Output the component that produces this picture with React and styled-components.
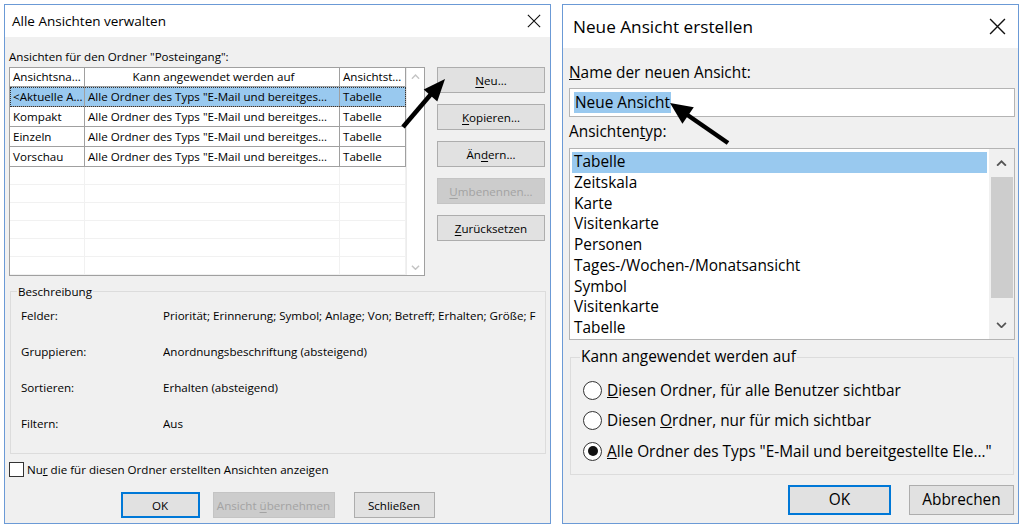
import React from "react";
import styled, { createGlobalStyle } from "styled-components";

const GlobalStyle = createGlobalStyle`
  html, body { margin: 0; padding: 0; background: #fff; }
  body { font-family: "Open Sans", "Noto Sans", sans-serif; color: #000; }
  * { box-sizing: border-box; }
`;

const Page = styled.div`
  position: relative;
  width: 1024px;
  height: 528px;
  display: flex;
  align-items: flex-start;
  padding: 4px 0 0 4px;
  gap: 11px;
  overflow: hidden;
`;

const Window = styled.div`
  width: ${(p) => p.$w}px;
  height: 520px;
  border: 1px solid #6b9ad6;
  background: #f0f0f0;
  display: flex;
  flex-direction: column;
`;

const TitleBar = styled.div`
  flex: none;
  height: ${(p) => p.$h}px;
  background: #fff;
  display: flex;
  align-items: center;
  justify-content: space-between;
  padding: 0 ${(p) => p.$pr}px 0 ${(p) => p.$pl}px;
  font-size: ${(p) => p.$fs}px;
  color: #000;
`;

const Body = styled.div`
  flex: 1;
  display: flex;
  flex-direction: column;
  padding: 0 ${(p) => p.$pr}px 0 ${(p) => p.$pl}px;
  font-size: ${(p) => p.$fs}px;
`;

const Label = styled.div`
  margin-top: ${(p) => p.$mt}px;
  line-height: ${(p) => p.$lh}px;
  white-space: nowrap;
`;

const MainRow = styled.div`
  display: flex;
  margin-top: 3px;
`;

/* ---- left list (table) ---- */
const ListBox = styled.div`
  width: 416px;
  height: 209px;
  background: #fff;
  border: 1px solid #a0a0a0;
  display: flex;
`;

const TableArea = styled.div`
  width: 396px;
  display: flex;
  flex-direction: column;
`;

const TRow = styled.div`
  display: grid;
  grid-template-columns: 75px 255px 66px;
  height: ${(p) => p.$h}px;
  background: ${(p) => (p.$sel ? "#99c9ef" : "transparent")};
  outline: ${(p) => (p.$sel ? "1px dotted #333" : "none")};
  outline-offset: -1px;
`;

const Cell = styled.div`
  border-right: 1px solid ${(p) => (p.$faint ? "#f1f1f1" : "#a0a0a0")};
  border-bottom: 1px solid ${(p) => (p.$faint ? "#f1f1f1" : "#a0a0a0")};
  padding-left: 3px;
  line-height: ${(p) => p.$lh || 19}px;
  white-space: nowrap;
  overflow: hidden;
  text-align: ${(p) => (p.$center ? "center" : "left")};
  color: #000;
`;

const ScrollCol = styled.div`
  flex: 1;
  display: flex;
  flex-direction: column;
  justify-content: space-between;
  align-items: center;
  padding: 6px 0 5px;
  background: #fff;
  border-left: 1px solid #ececec;
`;

const ButtonCol = styled.div`
  margin-left: 12px;
  width: 108px;
  display: flex;
  flex-direction: column;
  gap: 11px;
`;

const Button = styled.button`
  width: ${(p) => p.$w}px;
  height: ${(p) => p.$h}px;
  font-family: inherit;
  font-size: inherit;
  color: ${(p) => (p.$off ? "#a3a3a3" : "#000")};
  background: ${(p) => (p.$off ? "#cccccc" : "#e1e1e1")};
  border: ${(p) =>
    p.$primary ? "2px solid #0078d7" : p.$off ? "1px solid #c4c4c4" : "1px solid #adadad"};
  padding: 0;
  margin: 0;
  flex: none;
  u { text-underline-offset: 2px; }
`;

/* ---- group boxes ---- */
const Group = styled.fieldset`
  margin: ${(p) => p.$m};
  padding: 0;
  border: 1px solid #dcdcdc;
  border-radius: 0;
  min-width: 0;
  legend {
    margin-left: ${(p) => p.$lm}px;
    padding: 0 1px;
    line-height: ${(p) => p.$lh}px;
    color: #000;
  }
`;

const DescGrid = styled.div`
  display: grid;
  grid-template-columns: 142px 1fr;
  grid-auto-rows: 36px;
  align-items: center;
  padding: 0 6px 12px 10px;
  margin-top: -2px;
  span {
    white-space: nowrap;
    overflow: hidden;
  }
`;

const CheckRow = styled.label`
  display: flex;
  align-items: center;
  margin-top: 7px;
  height: 16px;
  white-space: nowrap;
`;

const CheckBox = styled.span`
  width: 15px;
  height: 15px;
  border: 1px solid #333;
  background: #fff;
  margin-right: 3px;
  flex: none;
`;

const ButtonRow = styled.div`
  display: flex;
  justify-content: ${(p) => p.$justify};
  gap: ${(p) => p.$gap}px;
  margin-top: ${(p) => p.$mt}px;
  padding: ${(p) => p.$pad};
`;

/* ---- right dialog ---- */
const TextInput = styled.div`
  margin-top: 7px;
  height: 29px;
  background: #fff;
  border: 1px solid #b4b4b4;
  display: flex;
  align-items: center;
  padding-left: 4px;
  mark {
    background: #99c9ef;
    color: #000;
    padding: 1px 1px;
    line-height: 19px;
  }
`;

const TypeList = styled.div`
  margin-top: 7px;
  height: 192px;
  background: #fff;
  border: 1px solid #b4b4b4;
  display: flex;
`;

const Items = styled.div`
  flex: 1;
  padding: 3px 2px 0;
`;

const Item = styled.div`
  line-height: 20.75px;
  padding-left: 2px;
  background: ${(p) => (p.$sel ? "#99c9ef" : "transparent")};
  white-space: nowrap;
`;

const VScroll = styled.div`
  width: 25px;
  background: #f0f0f0;
  display: flex;
  flex-direction: column;
  align-items: center;
`;

const ScrollBtn = styled.div`
  height: 28px;
  display: flex;
  align-items: center;
  justify-content: center;
  flex: none;
`;

const Thumb = styled.div`
  width: 22px;
  height: 121px;
  background: #cdcdcd;
  flex: none;
`;

const RadioList = styled.div`
  display: flex;
  flex-direction: column;
  padding: 9px 0 7px 12px;
`;

const RadioRow = styled.label`
  display: flex;
  align-items: center;
  height: 30.5px;
  white-space: nowrap;
`;

const Radio = styled.span`
  width: 19px;
  height: 19px;
  border-radius: 50%;
  border: 1px solid #333;
  background: #fff;
  margin-right: 5px;
  flex: none;
  display: flex;
  align-items: center;
  justify-content: center;
  &::after {
    content: "";
    display: ${(p) => (p.$on ? "block" : "none")};
    width: 10px;
    height: 10px;
    border-radius: 50%;
    background: #111;
  }
`;

const Overlay = styled.svg`
  position: absolute;
  left: 0;
  top: 0;
  pointer-events: none;
`;

const CloseX = ({ size, w = 1.3 }) => (
  <svg width={size} height={size} viewBox="0 0 16 16">
    <path d="M1 1 L15 15 M15 1 L1 15" stroke="#111" strokeWidth={w} fill="none" />
  </svg>
);

const Chevron = ({ up, color, size = 9 }) => (
  <svg width={size} height={size * 0.6} viewBox="0 0 10 6">
    <path
      d={up ? "M1 5.2 L5 1.2 L9 5.2" : "M1 0.8 L5 4.8 L9 0.8"}
      stroke={color}
      strokeWidth="1.6"
      fill="none"
    />
  </svg>
);

const views = [
  ["<Aktuelle A…", true],
  ["Kompakt", false],
  ["Einzeln", false],
  ["Vorschau", false],
];

const types = [
  "Tabelle",
  "Zeitskala",
  "Karte",
  "Visitenkarte",
  "Personen",
  "Tages-/Wochen-/Monatsansicht",
  "Symbol",
  "Visitenkarte",
  "Tabelle",
];

const desc = [
  ["Felder:", "Priorität; Erinnerung; Symbol; Anlage; Von; Betreff; Erhalten; Größe; F"],
  ["Gruppieren:", "Anordnungsbeschriftung (absteigend)"],
  ["Sortieren:", "Erhalten (absteigend)"],
  ["Filtern:", "Aus"],
];

const ManageDialog = () => (
  <Window $w={547}>
    <TitleBar $h={32} $pl={7} $pr={9} $fs={13.5}>
      <span>Alle Ansichten verwalten</span>
      <CloseX size={14} />
    </TitleBar>
    <Body $pl={4} $pr={4} $fs={11.6}>
      <Label $mt={12} $lh={15}>Ansichten für den Ordner "Posteingang":</Label>
      <MainRow>
        <ListBox>
          <TableArea>
            <TRow $h={19}>
              <Cell $lh={18}>Ansichtsna…</Cell>
              <Cell $lh={18} $center>Kann angewendet werden auf</Cell>
              <Cell $lh={18}>Ansichtst…</Cell>
            </TRow>
            {views.map(([name, sel]) => (
              <TRow key={name} $h={20} $sel={sel}>
                <Cell>{name}</Cell>
                <Cell>Alle Ordner des Typs "E-Mail und bereitges…</Cell>
                <Cell>Tabelle</Cell>
              </TRow>
            ))}
            {[0, 1, 2, 3, 4, 5].map((i) => (
              <TRow key={i} $h={19}>
                <Cell $faint />
                <Cell $faint />
                <Cell $faint />
              </TRow>
            ))}
          </TableArea>
          <ScrollCol>
            <Chevron up color="#c4c4c4" />
            <Chevron color="#c4c4c4" />
          </ScrollCol>
        </ListBox>
        <ButtonCol>
          <Button $w={108} $h={26}><u>N</u>eu…</Button>
          <Button $w={108} $h={26}><u>K</u>opieren…</Button>
          <Button $w={108} $h={26}>Än<u>d</u>ern…</Button>
          <Button $w={108} $h={26} $off><u>U</u>mbenennen…</Button>
          <Button $w={108} $h={26}><u>Z</u>urücksetzen</Button>
        </ButtonCol>
      </MainRow>
      <Group $m="8px 0 0 1px" $lm={6} $lh={15}>
        <legend>Beschreibung</legend>
        <DescGrid>
          {desc.map(([k, v]) => (
            <React.Fragment key={k}>
              <span>{k}</span>
              <span>{v}</span>
            </React.Fragment>
          ))}
        </DescGrid>
      </Group>
      <CheckRow>
        <CheckBox />
        <span>Nu<u>r</u> die für diesen Ordner erstellten Ansichten anzeigen</span>
      </CheckRow>
      <ButtonRow $justify="center" $gap={13} $mt={15} $pad="0">
        <Button $w={79} $h={26} $primary>OK</Button>
        <Button $w={122} $h={26} $off>Ansicht <u>ü</u>bernehmen</Button>
        <Button $w={81} $h={26} style={{ marginLeft: 6 }}>Schließen</Button>
      </ButtonRow>
    </Body>
  </Window>
);

const CreateDialog = () => (
  <Window $w={457}>
    <TitleBar $h={43} $pl={10} $pr={12} $fs={17.2}>
      <span>Neue Ansicht erstellen</span>
      <CloseX size={17} />
    </TitleBar>
    <Body $pl={6} $pr={3} $fs={15.4}>
      <Label $mt={16} $lh={18}><u>N</u>ame der neuen Ansicht:</Label>
      <TextInput style={{ marginTop: 6 }}>
        <mark>Neue Ansicht</mark>
      </TextInput>
      <Label $mt={6} $lh={18}>Ansichten<u>t</u>yp:</Label>
      <TypeList>
        <Items>
          {types.map((t, i) => (
            <Item key={i} $sel={i === 0}>{t}</Item>
          ))}
        </Items>
        <VScroll>
          <ScrollBtn><Chevron up color="#555" size={11} /></ScrollBtn>
          <Thumb />
          <div style={{ flex: 1 }} />
          <ScrollBtn><Chevron color="#555" size={11} /></ScrollBtn>
        </VScroll>
      </TypeList>
      <Group $m="8px 1px 0 1px" $lm={9} $lh={18}>
        <legend>Kann angewendet werden auf</legend>
        <RadioList>
          <RadioRow><Radio /><span><u>D</u>iesen Ordner, für alle Benutzer sichtbar</span></RadioRow>
          <RadioRow><Radio /><span>Diesen <u>O</u>rdner, nur für mich sichtbar</span></RadioRow>
          <RadioRow><Radio $on /><span><u>A</u>lle Ordner des Typs "E-Mail und bereitgestellte Ele…"</span></RadioRow>
        </RadioList>
      </Group>
      <ButtonRow $justify="flex-end" $gap={18} $mt={10} $pad="0 1px 0 0">
        <Button $w={103} $h={30} $primary>OK</Button>
        <Button $w={105} $h={30}>Abbrechen</Button>
      </ButtonRow>
    </Body>
  </Window>
);

const Arrows = () => (
  <Overlay width="1024" height="528" viewBox="0 0 1024 528">
    <line x1="403" y1="127" x2="432" y2="93" stroke="#000" strokeWidth="4.5" />
    <polygon points="445,79 437.3,101.4 423.7,89.6" fill="#000" />
    <line x1="728" y1="143" x2="686" y2="114" stroke="#000" strokeWidth="4.5" />
    <polygon points="670,103 693.8,107.3 682.4,123.7" fill="#000" />
  </Overlay>
);

export default function App() {
  return (
    <>
      <GlobalStyle />
      <Page>
        <ManageDialog />
        <CreateDialog />
        <Arrows />
      </Page>
    </>
  );
}
